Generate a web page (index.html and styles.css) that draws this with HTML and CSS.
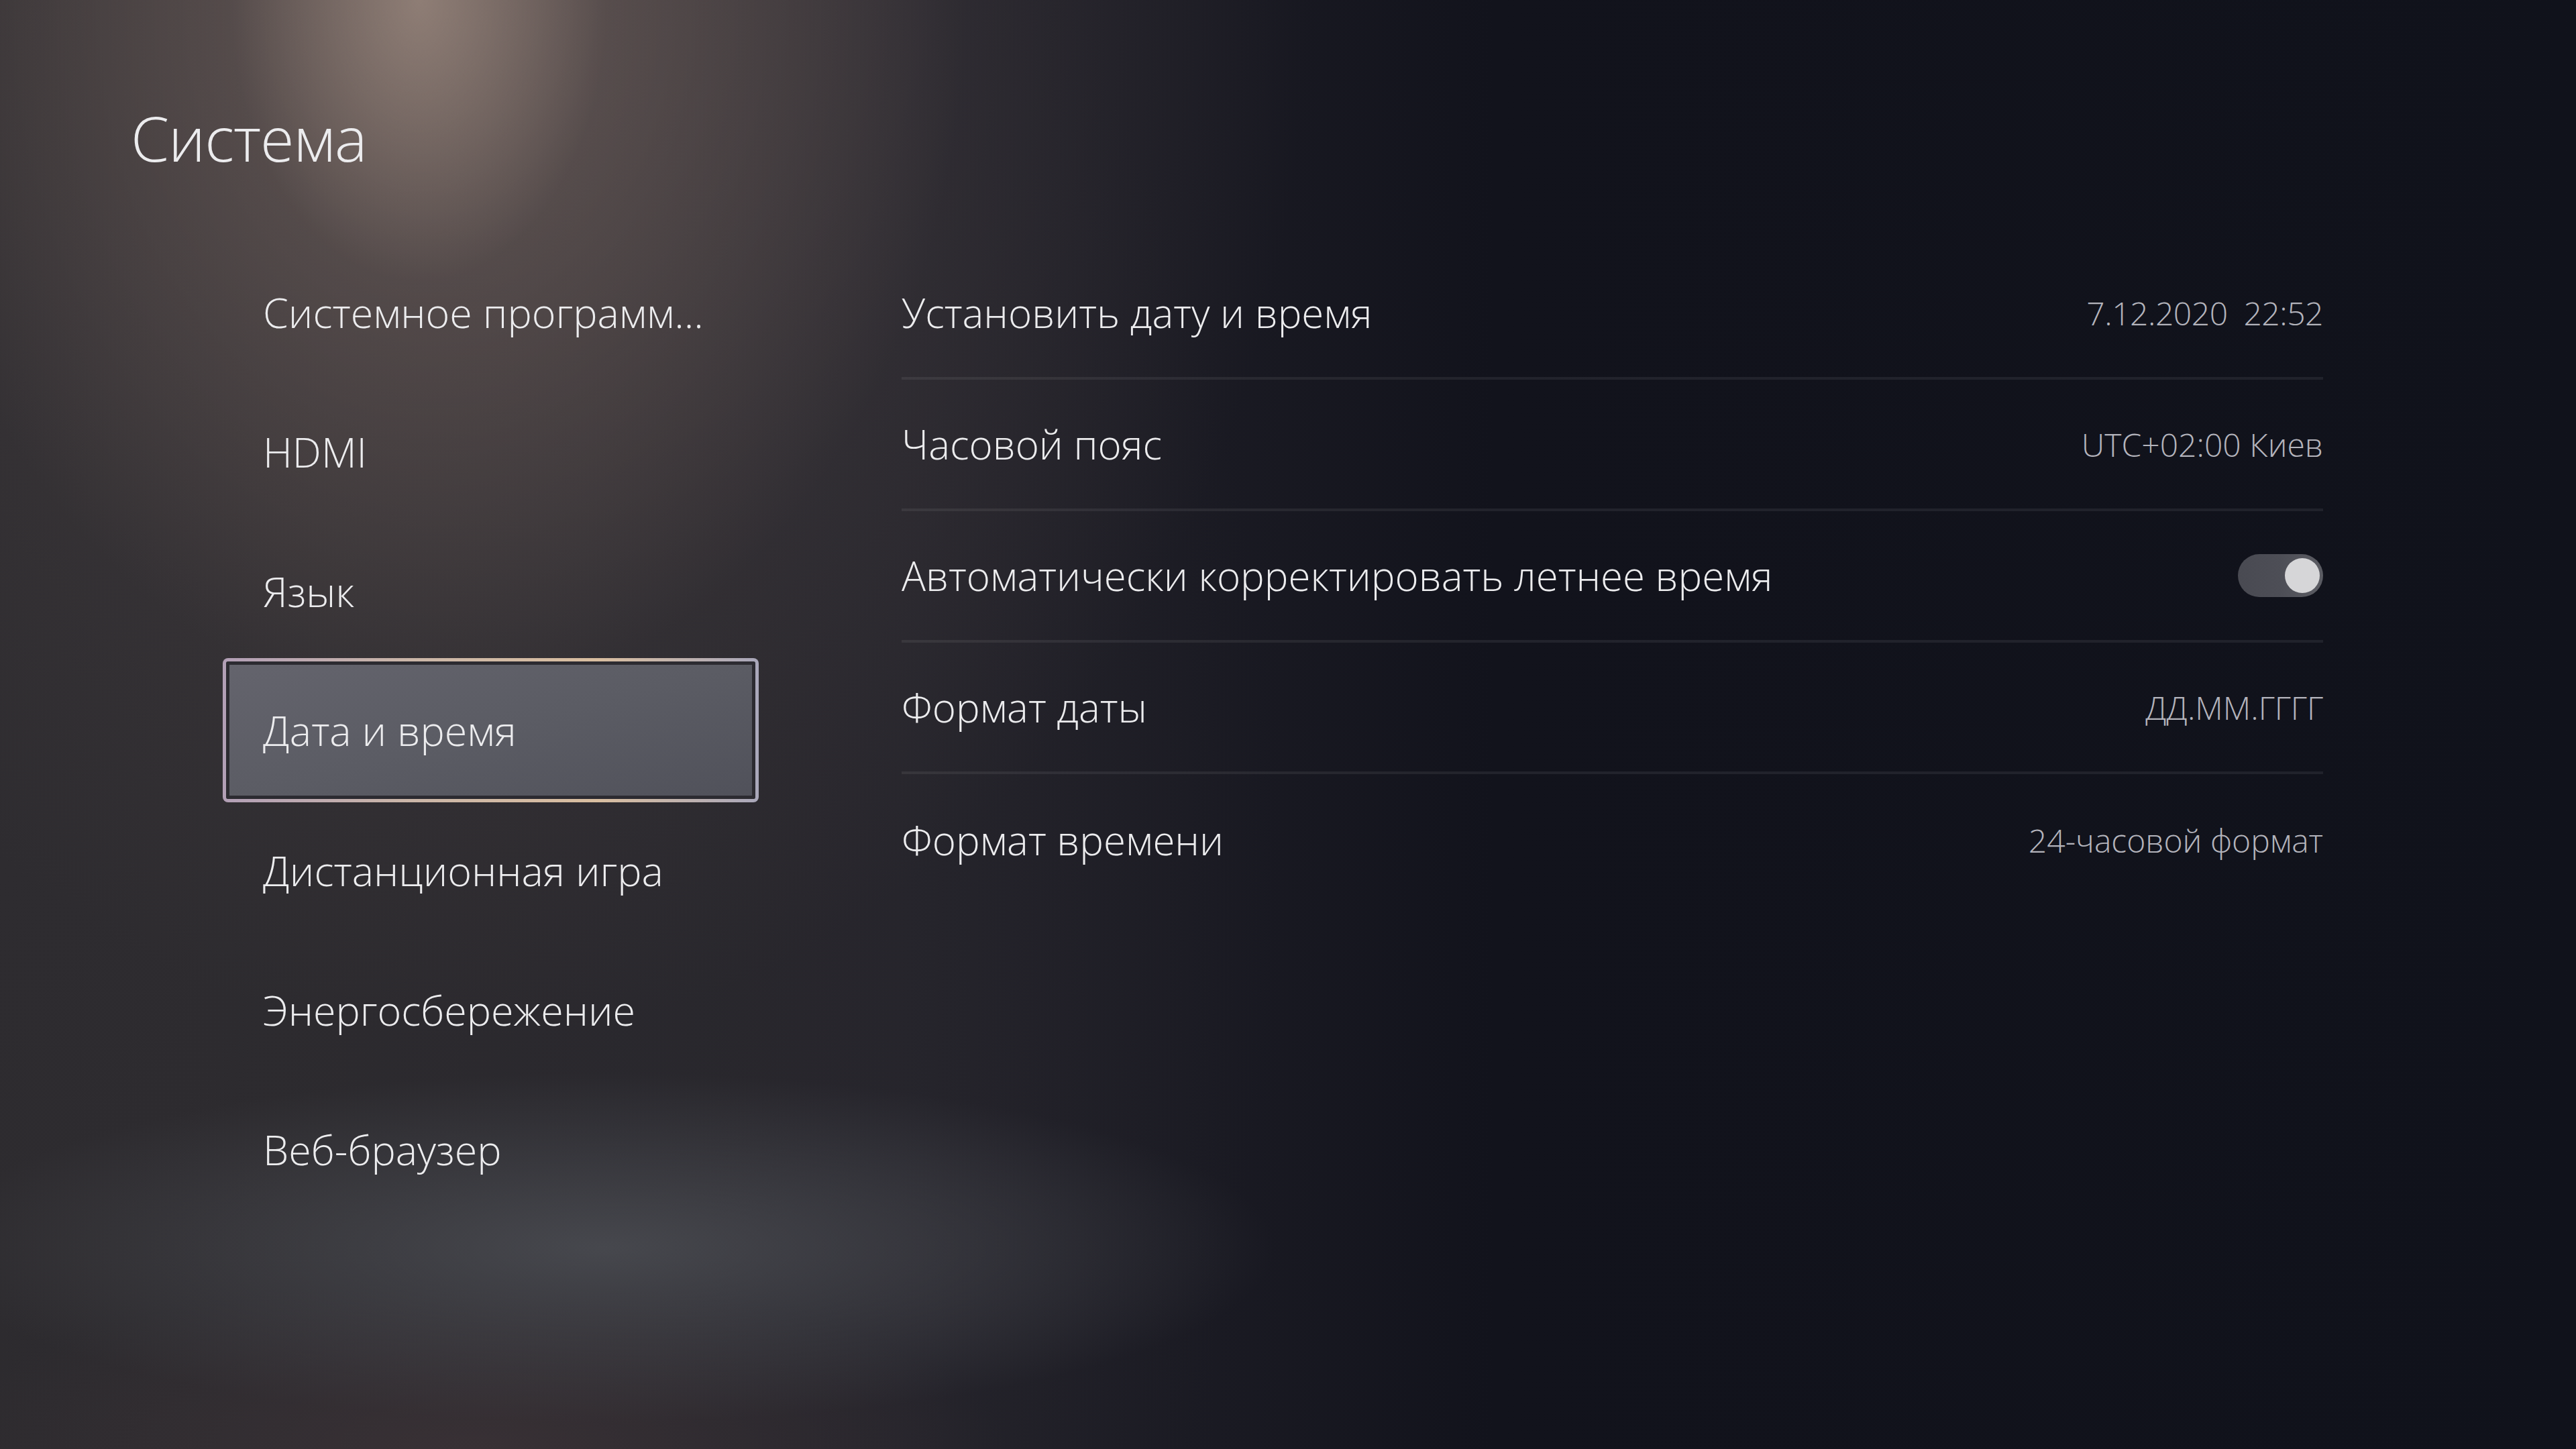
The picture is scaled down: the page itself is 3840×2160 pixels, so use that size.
FILE: index.html
```html
<!DOCTYPE html>
<html lang="ru">
<head>
    <meta charset="UTF-8">
    <title>Система</title>
    <link rel="stylesheet" href="styles.css">
</head>
<body>
    <div class="screen">
        <h1 class="title">Система</h1>
        <div class="content">
            <ul class="nav">
                <li class="nav-item">Системное программ...</li>
                <li class="nav-item">HDMI</li>
                <li class="nav-item">Язык</li>
                <li class="nav-item selected">Дата и время</li>
                <li class="nav-item">Дистанционная игра</li>
                <li class="nav-item">Энергосбережение</li>
                <li class="nav-item">Веб-браузер</li>
            </ul>
            <ul class="settings">
                <li class="row">
                    <span class="label">Установить дату и время</span>
                    <span class="value date">7.12.2020&nbsp;&nbsp;22:52</span>
                </li>
                <li class="row">
                    <span class="label">Часовой пояс</span>
                    <span class="value">UTC+02:00 Киев</span>
                </li>
                <li class="row">
                    <span class="label">Автоматически корректировать летнее время</span>
                    <span class="toggle on"><span class="knob"></span></span>
                </li>
                <li class="row">
                    <span class="label">Формат даты</span>
                    <span class="value">ДД.ММ.ГГГГ</span>
                </li>
                <li class="row last">
                    <span class="label">Формат времени</span>
                    <span class="value">24-часовой формат</span>
                </li>
            </ul>
        </div>
    </div>
</body>
</html>
```

FILE: styles.css
```css
html, body {
    margin: 0;
    padding: 0;
}
body {
    width: 3840px;
    height: 2160px;
    overflow: hidden;
    font-family: "Open Sans", "Noto Sans", sans-serif;
    color: #ececee;
    background-color: #10121b;
    background-image:
        radial-gradient(ellipse 280px 420px at 625px 0px, rgba(170,150,138,0.6), rgba(170,150,138,0) 100%),
        radial-gradient(ellipse 800px 1050px at 640px 0px, rgba(125,108,102,0.6), rgba(125,108,102,0) 100%),
        radial-gradient(ellipse 1250px 1550px at 700px 0px, rgba(90,80,80,0.5), rgba(90,80,80,0) 100%),
        radial-gradient(ellipse 1000px 260px at 900px 1860px, rgba(80,82,88,0.75), rgba(80,82,88,0) 100%),
        radial-gradient(ellipse 800px 250px at 700px 2160px, rgba(62,52,56,0.7), rgba(62,52,56,0) 100%),
        radial-gradient(ellipse 1900px 2400px at 0px 1300px, rgba(46,44,48,1), rgba(46,44,48,0) 100%),
        linear-gradient(90deg, #2b292c 0%, #23222a 35%, #12131c 58%, #10121b 100%);
}
.screen {
    padding: 160px 0 0 195px;
}
.title {
    margin: 0;
    font-size: 92px;
    line-height: 1;
    font-weight: 300;
    letter-spacing: -1px;
}
.content {
    display: flex;
    margin-top: 109px;
    margin-left: 137px;
    gap: 213px;
}
.nav {
    list-style: none;
    margin: 0;
    padding: 0;
    width: 799px;
}
.nav-item {
    height: 208px;
    display: flex;
    align-items: center;
    padding-left: 60px;
    font-size: 61px;
    font-weight: 300;
    box-sizing: border-box;
}
.nav-item.selected {
    height: 215px;
    margin: -4px 0 -3px;
    padding-left: 55px;
    border: 5px solid transparent;
    border-radius: 8px;
    background:
        linear-gradient(165deg, #64646d 0%, #5b5c64 50%, #50515a 100%) padding-box,
        linear-gradient(90deg, #b29fb6 0%, #cbb6a8 35%, #d9bea0 70%, #a9a7ba 100%) border-box;
    box-shadow: inset 0 0 0 5px #2c2b31;
}
.settings {
    list-style: none;
    margin: 0;
    padding: 0;
    width: 2119px;
    margin-top: 9px;
}
.row {
    height: 196px;
    box-sizing: border-box;
    display: flex;
    align-items: center;
    justify-content: space-between;
    border-bottom: 4px solid rgba(255,255,255,0.07);
}
.row.last {
    border-bottom: none;
}
.label {
    font-size: 60px;
    font-weight: 300;
}
.value {
    font-size: 48px;
    font-weight: 300;
    color: #b4b4bc;
}
.value.date {
    letter-spacing: -0.5px;
}
.toggle {
    width: 127px;
    height: 64px;
    border-radius: 32px;
    background: linear-gradient(90deg, #494a52 0%, #4d4e56 50%, #5b5c63 100%);
    display: flex;
    align-items: center;
    justify-content: flex-end;
    padding-right: 5px;
    box-sizing: border-box;
}
.knob {
    width: 52px;
    height: 52px;
    border-radius: 50%;
    background: #d6d6d8;
}
```
